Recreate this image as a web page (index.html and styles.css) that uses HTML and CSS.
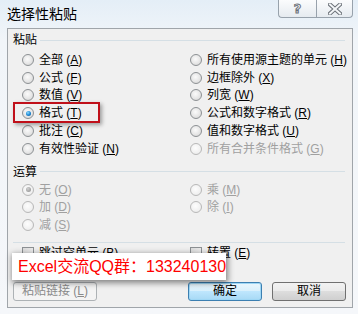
FILE: index.html
```html
<!DOCTYPE html>
<html lang="zh-CN">
<head>
<meta charset="utf-8">
<title>选择性粘贴</title>
<link rel="stylesheet" href="styles.css">
</head>
<body>
<div class="frame">
  <div class="titlebar">
    <span class="title">选择性粘贴</span>
    <div class="caption">
      <span class="cbtn help"><span class="qmark">?</span></span>
      <span class="cbtn close">
        <svg width="14" height="12" viewBox="0 0 14 12">
          <path d="M2 1.5 L12 10.5 M12 1.5 L2 10.5" stroke="#6b7178" stroke-width="4" stroke-linecap="square" fill="none"/>
          <path d="M2 1.5 L12 10.5 M12 1.5 L2 10.5" stroke="#f4f6f8" stroke-width="2" stroke-linecap="square" fill="none"/>
        </svg>
      </span>
    </div>
  </div>
  <div class="client">
    <div class="glabel"><span>粘贴</span><i class="rule"></i></div>
    <div class="opts paste">
      <label class="opt"><i class="radio"></i><span>全部 (<u>A</u>)</span></label>
      <label class="opt"><i class="radio"></i><span>所有使用源主题的单元 (<u>H</u>)</span></label>
      <label class="opt"><i class="radio"></i><span>公式 (<u>F</u>)</span></label>
      <label class="opt"><i class="radio"></i><span>边框除外 (<u>X</u>)</span></label>
      <label class="opt"><i class="radio"></i><span>数值 (<u>V</u>)</span></label>
      <label class="opt"><i class="radio"></i><span>列宽 (<u>W</u>)</span></label>
      <label class="opt"><i class="radio on"></i><span>格式 (<u>T</u>)</span></label>
      <label class="opt"><i class="radio"></i><span>公式和数字格式 (<u>R</u>)</span></label>
      <label class="opt"><i class="radio"></i><span>批注 (<u>C</u>)</span></label>
      <label class="opt"><i class="radio"></i><span>值和数字格式 (<u>U</u>)</span></label>
      <label class="opt"><i class="radio"></i><span>有效性验证 (<u>N</u>)</span></label>
      <label class="opt dis"><i class="radio"></i><span>所有合并条件格式 (<u>G</u>)</span></label>
    </div>
    <div class="glabel ops-label"><span>运算</span><i class="rule"></i></div>
    <div class="opts ops">
      <label class="opt dis"><i class="radio on"></i><span>无 (<u>O</u>)</span></label>
      <label class="opt dis"><i class="radio"></i><span>乘 (<u>M</u>)</span></label>
      <label class="opt dis"><i class="radio"></i><span>加 (<u>D</u>)</span></label>
      <label class="opt dis"><i class="radio"></i><span>除 (<u>I</u>)</span></label>
      <label class="opt dis"><i class="radio"></i><span>减 (<u>S</u>)</span></label>
    </div>
    <div class="sep"></div>
    <div class="opts checks">
      <label class="opt"><i class="check"></i><span>跳过空单元 (<u>B</u>)</span></label>
      <label class="opt"><i class="check"></i><span>转置 (<u>E</u>)</span></label>
    </div>
    <div class="buttons">
      <button class="btn link" disabled>粘贴链接 (<u>L</u>)</button>
      <button class="btn ok">确定</button>
      <button class="btn cancel">取消</button>
    </div>
    <div class="highlight"></div>
    <div class="overlay">Excel交流QQ群：133240130</div>
  </div>
</div>
</body>
</html>
```
FILE: styles.css
```css
* { box-sizing: border-box; }
html, body { margin: 0; padding: 0; }
body {
  width: 358px;
  height: 314px;
  overflow: hidden;
  font-family: "Liberation Sans", "Noto Sans CJK SC", sans-serif;
  font-size: 12px;
  color: #000;
}
.frame {
  width: 358px;
  height: 314px;
  display: flex;
  flex-direction: column;
  background: linear-gradient(to bottom, #e4eef7 0px, #f1f5f9 40px, #f5f7fa 100%);
}
.titlebar {
  height: 28px;
  display: flex;
  justify-content: space-between;
  align-items: flex-start;
}
.title {
  padding: 5px 0 0 7px;
  font-size: 14px;
  line-height: 18px;
  color: #000;
}
.caption {
  display: flex;
  margin-right: 5px;
}
.cbtn {
  height: 18px;
  border: 1px solid #98a2ac;
  border-top: none;
  background: linear-gradient(to bottom, #fbfcfd, #e6ebf0);
  display: flex;
  align-items: center;
  justify-content: center;
}
.help {
  width: 38px;
  border-right: none;
  border-radius: 0 0 0 4px;
}
.close {
  width: 37px;
  border-radius: 0 0 4px 0;
}
.qmark {
  font-family: "DejaVu Sans", sans-serif;
  font-size: 13px;
  font-weight: bold;
  line-height: 14px;
  color: #f4f6f8;
  -webkit-text-stroke: 1px #6b7178;
}
.client {
  position: relative;
  margin: 0 5px 0 7px;
  height: 280px;
  border: 1px solid #a0a5aa;
  background: #f0f0f0;
  padding: 3px 6px 0 5px;
  display: flex;
  flex-direction: column;
}
.glabel {
  display: flex;
  align-items: center;
  height: 16px;
  line-height: 16px;
  gap: 3px;
}
.glabel .rule {
  flex: 1;
  height: 1px;
  background: #d5dfe5;
  margin-right: 1px;
}
.opts {
  display: grid;
  grid-template-columns: 168px 1fr;
  grid-auto-rows: 17.8px;
  margin: 3px 0 0 9px;
}
.ops-label { margin-top: 6px; }
.ops { margin-top: 1px; }
.opt {
  display: flex;
  align-items: center;
  gap: 5px;
  line-height: 14px;
  white-space: pre;
}
.opt u, .btn u { text-decoration: underline; text-underline-offset: 1px; }
.opt.dis { color: #a0a0a0; }
.radio {
  position: relative;
  flex: none;
  width: 12px;
  height: 12px;
  border-radius: 50%;
  border: 1px solid #8d9194;
  background: radial-gradient(circle at 45% 40%, #fbfbfb 0%, #e6e6e6 55%, #cfcfcf 100%);
}
.radio.on::after {
  content: "";
  position: absolute;
  left: 2.5px;
  top: 2.5px;
  width: 5px;
  height: 5px;
  border-radius: 50%;
  background: radial-gradient(circle at 40% 35%, #8fdcff 0%, #1f8ad6 50%, #0b4f8c 100%);
}
.dis .radio {
  border-color: #b8b8b8;
  background: radial-gradient(circle at 45% 40%, #fdfdfd 0%, #f1f1f1 60%, #e4e4e4 100%);
}
.dis .radio.on::after {
  background: radial-gradient(circle at 40% 35%, #d0d0d0 0%, #a6a6a6 60%, #8e8e8e 100%);
}
.check {
  flex: none;
  width: 12px;
  height: 12px;
  border: 1px solid #8d9194;
  background: linear-gradient(135deg, #dcdcdc, #fbfbfb);
}
.sep {
  height: 1px;
  background: #d5dfe5;
  margin: 7.6px 1px 0 0;
}
.checks { margin-top: 1px; }
.buttons {
  display: flex;
  margin-top: 20px;
  gap: 10px;
}
.btn {
  height: 19px;
  padding: 0;
  font-family: "Liberation Sans", "Noto Sans CJK SC", sans-serif;
  font-size: 12px;
  line-height: 15px;
  color: #000;
  white-space: pre;
  border: 1px solid #707070;
  border-radius: 3px;
  background: linear-gradient(to bottom, #f2f2f2 0%, #ebebeb 45%, #dddddd 50%, #cfcfcf 100%);
}
.btn.link {
  width: 84px;
  margin-right: auto;
  color: #8a8a8a;
  border-color: #adb2b5;
  background: #f4f4f4;
}
.btn.ok {
  width: 74px;
  border-color: #3c7fb1;
  box-shadow: inset 0 0 0 1px #9fd7f5;
  background: linear-gradient(to bottom, #eaf6fd 0%, #d9f0fc 45%, #bee6fd 50%, #a7d9f5 100%);
}
.btn.cancel { width: 74px; }
.highlight {
  position: absolute;
  left: 5px;
  top: 73px;
  width: 87px;
  height: 21px;
  border: 2px solid #c0101a;
  box-shadow: 2px 2px 4px rgba(0, 0, 0, 0.35);
}
.overlay {
  position: absolute;
  left: 4px;
  top: 224px;
  width: 214px;
  height: 27px;
  padding-left: 6px;
  background: #fff;
  color: #ff0000;
  font-size: 16px;
  line-height: 27px;
  white-space: nowrap;
  box-shadow: 1px 2px 6px 1px rgba(0, 0, 0, 0.45);
}
```
